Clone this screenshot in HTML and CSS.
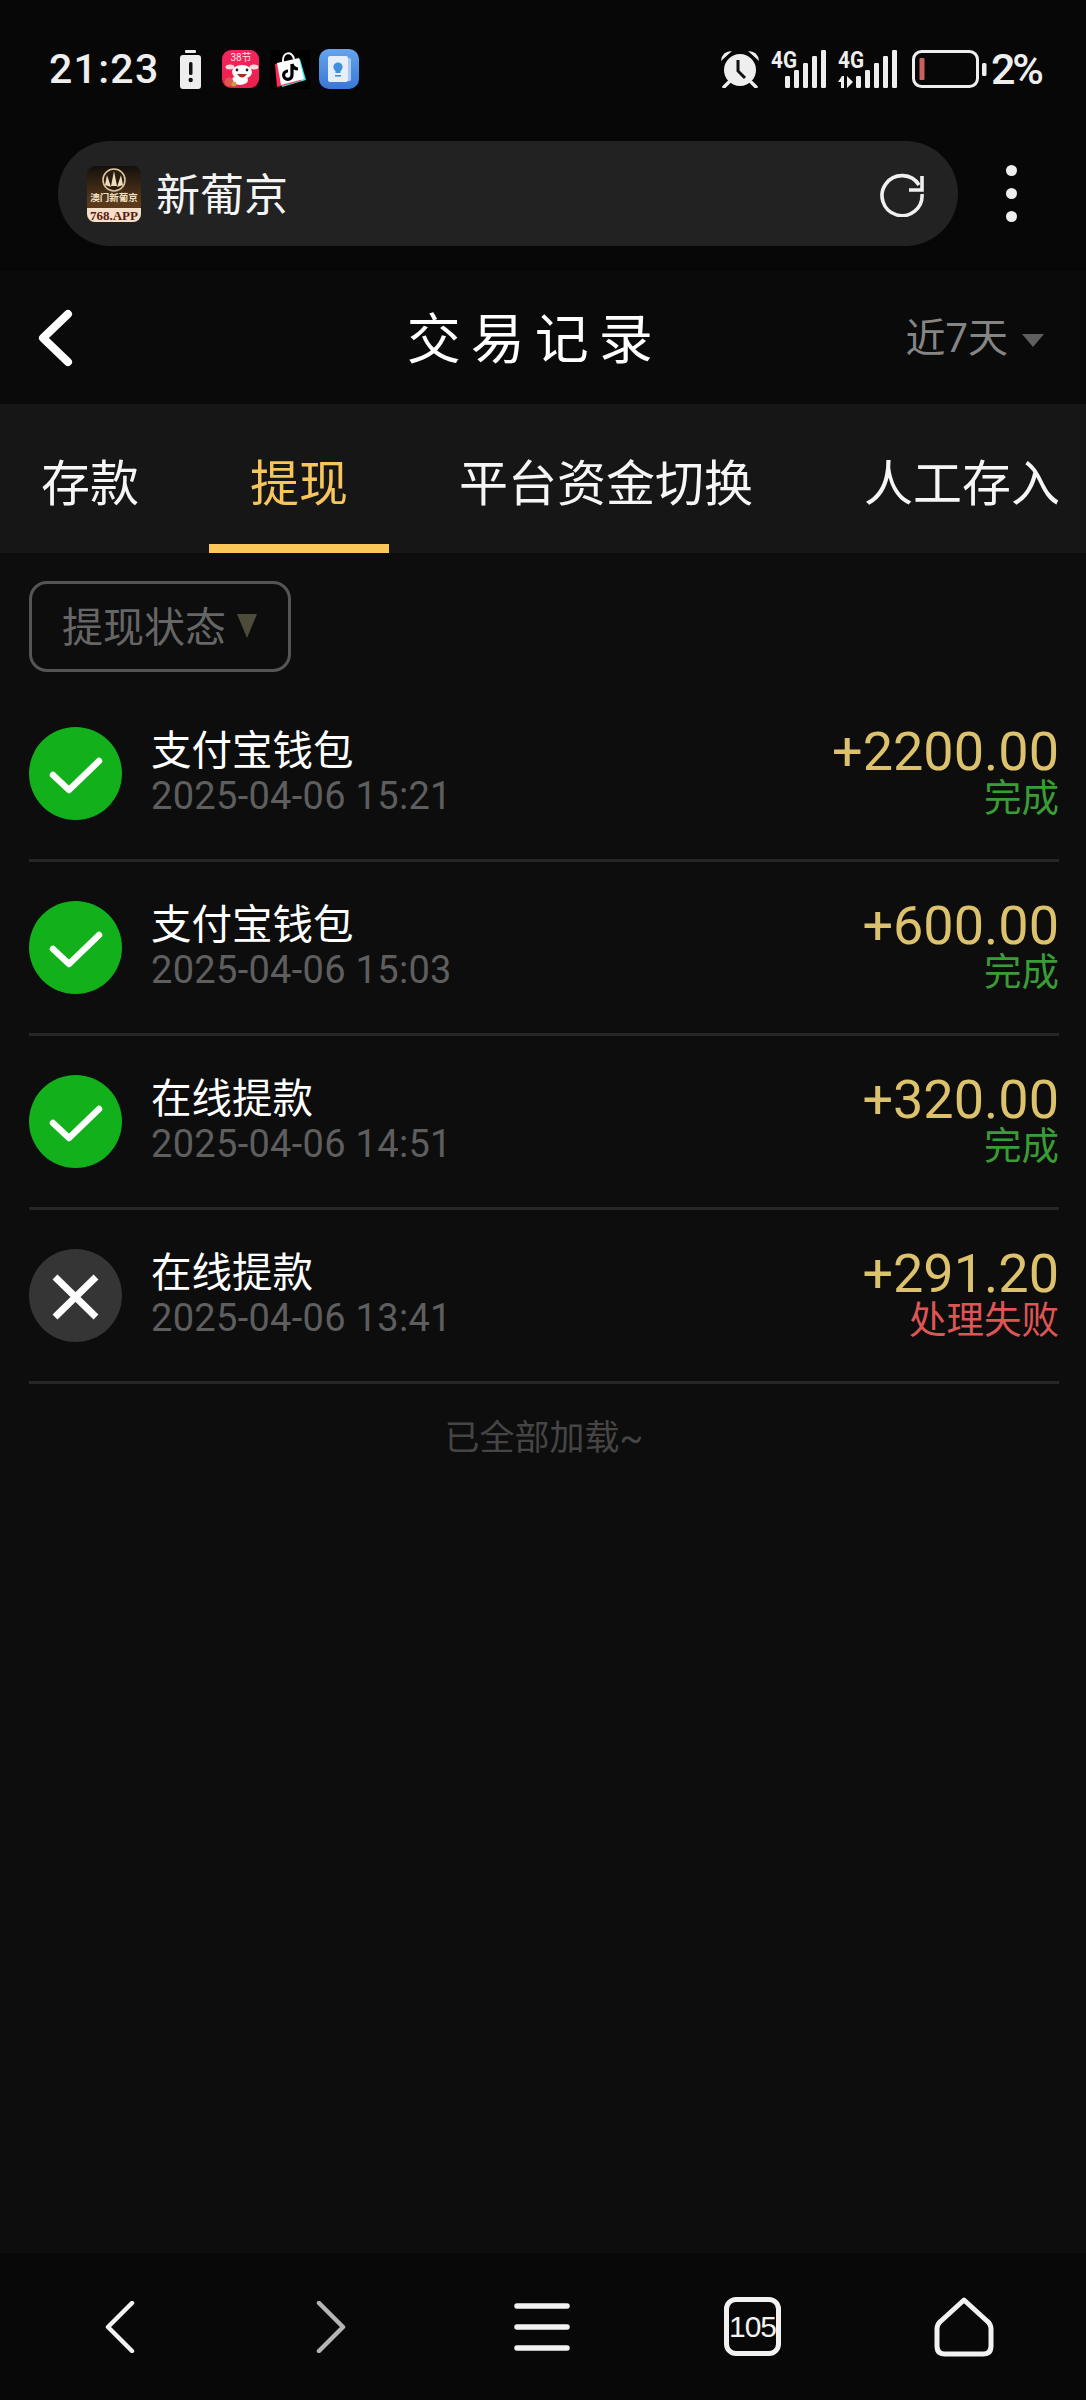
FILE: index.html
```html
<!DOCTYPE html>
<html lang="zh-CN">
<head>
  <meta charset="UTF-8" />
  <meta name="viewport" content="width=device-width, initial-scale=1.0"/>
  <title>交易记录</title>
  <link rel="stylesheet" href="styles.css">
</head>
<body>
  <svg class="sprites" width="0" height="0">
    <symbol id="ok" viewBox="0 0 93 93">
      <circle cx="46.5" cy="46.5" r="46.5" fill="#12b01a"/>
      <path d="M24 48 L40 63 L70 34" fill="none" stroke="#fff" stroke-width="6.5" stroke-linecap="round" stroke-linejoin="round"/>
    </symbol>
    <symbol id="fail" viewBox="0 0 93 93">
      <circle cx="46.5" cy="46.5" r="46.5" fill="#353535"/>
      <path d="M26 28 L67 68 M67 28 L26 68" fill="none" stroke="#fff" stroke-width="7"/>
    </symbol>
  </svg>

  <header class="status">
    <div class="status-left">
      <span class="clock">21:23</span>
      <svg class="ic-batt" width="23" height="39" viewBox="0 0 23 39">
        <rect x="6" y="0" width="11" height="3" rx="1" fill="#eee"/>
        <rect x="1" y="5" width="21" height="34" rx="3" fill="#eee"/>
        <rect x="10" y="12" width="3.5" height="13" rx="1.5" fill="#111"/>
        <circle cx="11.7" cy="30" r="2.2" fill="#111"/>
      </svg>
      <svg class="ic-pink" width="37" height="38" viewBox="0 0 37 38">
        <defs>
          <linearGradient id="pinkbg" x1="0" y1="0" x2="0" y2="1">
            <stop offset="0" stop-color="#f5265f"/>
            <stop offset="1" stop-color="#e8204a"/>
          </linearGradient>
        </defs>
        <rect width="37" height="38" rx="9" fill="url(#pinkbg)"/>
        <text x="19" y="11" text-anchor="middle" class="pink-txt">38节</text>
        <ellipse cx="20" cy="22" rx="10" ry="7" fill="#fff"/>
        <ellipse cx="8" cy="17" rx="4.5" ry="2.5" fill="#fbd9d9"/>
        <ellipse cx="32" cy="17" rx="4.5" ry="2.5" fill="#fbd9d9"/>
        <ellipse cx="18" cy="30" rx="8" ry="5" fill="#fff"/>
        <circle cx="15" cy="20" r="1.4" fill="#222"/>
        <circle cx="25" cy="20" r="1.4" fill="#222"/>
        <path d="M15 24 Q20 31 25 24 Z" fill="#b3261e"/>
        <circle cx="7" cy="32" r="4.5" fill="#e2574c"/>
        <circle cx="12" cy="34" r="2.5" fill="#c9a04a"/>
      </svg>
      <svg class="ic-shop" width="40" height="39" viewBox="0 0 40 39">
        <rect width="40" height="39" fill="#000"/>
        <path d="M7 14 L30 9 L36 30 L12 37 Z" fill="#25f4ee"/>
        <path d="M5 14 L26 9 L31 31 L7 37 Z" fill="#fe2c55"/>
        <path d="M7 13 L29 8 L34 29 L11 35 Z" fill="#fff"/>
        <path d="M13 12 C12 2 22 0 24 9" fill="none" stroke="#fff" stroke-width="2"/>
        <path d="M22 14 L22 25 A4.2 4.2 0 1 1 18 21 M22 14 C23 18 25 19 28 19" fill="none" stroke="#000" stroke-width="3.2"/>
      </svg>
      <svg class="ic-tips" width="40" height="40" viewBox="0 0 40 40">
        <defs>
          <linearGradient id="bluebg" x1="0" y1="0" x2="0" y2="1">
            <stop offset="0" stop-color="#64a5ec"/>
            <stop offset="1" stop-color="#3b77d6"/>
          </linearGradient>
        </defs>
        <rect width="40" height="40" rx="10" fill="url(#bluebg)"/>
        <rect x="28" y="9" width="4" height="23" rx="1.5" fill="#a9c8f2"/>
        <rect x="9" y="7" width="20" height="26" rx="2" fill="#e6eefa"/>
        <circle cx="19" cy="18" r="4.6" fill="#3f8fe0"/>
        <rect x="16.5" y="22" width="5" height="2" fill="#3f8fe0"/>
        <rect x="16" y="26" width="6" height="1.6" fill="#3f8fe0"/>
      </svg>
    </div>
    <div class="status-right">
      <svg class="ic-alarm" width="40" height="38" viewBox="0 0 40 38">
        <circle cx="20" cy="20" r="16" fill="#eee"/>
        <path d="M1 11 Q2 1 12 1 Z M39 11 Q38 1 28 1 Z" fill="#eee"/>
        <path d="M9 32 L4 37 M31 32 L36 37" stroke="#eee" stroke-width="3.4" stroke-linecap="round"/>
        <path d="M18 10 L18 21 L25 28" fill="none" stroke="#111" stroke-width="3"/>
      </svg>
      <svg class="ic-signal" width="58" height="38" viewBox="0 0 58 38">
        <text x="0" y="18" class="sig-txt" textLength="26" lengthAdjust="spacingAndGlyphs">4G</text>
        <rect x="14" y="26" width="5" height="12" rx="1.2" fill="#eee"/>
        <rect x="23" y="20" width="5" height="18" rx="1.2" fill="#eee"/>
        <rect x="32" y="13" width="5" height="25" rx="1.2" fill="#eee"/>
        <rect x="41" y="6" width="5" height="32" rx="1.2" fill="#eee"/>
        <rect x="50" y="0" width="5" height="38" rx="1.2" fill="#eee"/>
      </svg>
      <svg class="ic-signal" width="60" height="38" viewBox="0 0 60 38">
        <text x="0" y="18" class="sig-txt" textLength="26" lengthAdjust="spacingAndGlyphs">4G</text>
        <path d="M0 32 L4 26 L6 26 L6 38 L3 38 L3 32 Z M9 26 L15 32 L9 38 Z" fill="#eee"/>
        <rect x="18" y="26" width="5" height="12" rx="1.2" fill="#eee"/>
        <rect x="27" y="20" width="5" height="18" rx="1.2" fill="#eee"/>
        <rect x="36" y="13" width="5" height="25" rx="1.2" fill="#eee"/>
        <rect x="45" y="6" width="5" height="32" rx="1.2" fill="#eee"/>
        <rect x="54" y="0" width="5" height="38" rx="1.2" fill="#eee"/>
      </svg>
      <svg class="ic-power" width="75" height="38" viewBox="0 0 75 38">
        <rect x="1.5" y="1.5" width="64" height="35" rx="8" fill="none" stroke="#eee" stroke-width="3"/>
        <rect x="7.5" y="8" width="5" height="22" rx="1" fill="#c9605c"/>
        <rect x="70" y="13" width="4.5" height="13" rx="1.5" fill="#eee"/>
      </svg>
      <span class="pct">2%</span>
    </div>
  </header>

  <div class="urlbar">
    <div class="pill">
      <svg class="logo" width="54" height="56" viewBox="0 0 54 56">
        <defs>
          <linearGradient id="logobg" x1="0" y1="0" x2="0" y2="1">
            <stop offset="0" stop-color="#14100c"/>
            <stop offset="0.65" stop-color="#5a3a1a"/>
          </linearGradient>
          <clipPath id="logoclip"><rect width="54" height="56" rx="8"/></clipPath>
        </defs>
        <g clip-path="url(#logoclip)">
          <rect width="54" height="56" fill="url(#logobg)"/>
          <circle cx="27" cy="14" r="11" fill="#2a1c0e" stroke="#e0c6a0" stroke-width="1.6"/>
          <path d="M27 5 L30 20 L24 20 Z M20 9 L24 21 L18 19 Z M34 9 L30 21 L36 19 Z" fill="#efdcbd"/>
          <text x="27" y="35" text-anchor="middle" class="logo-cn">澳门新葡京</text>
          <rect x="0" y="42" width="54" height="14" fill="#f5dfc8"/>
          <text x="27" y="53.5" text-anchor="middle" class="logo-app" textLength="48" lengthAdjust="spacingAndGlyphs">768.APP</text>
        </g>
      </svg>
      <span class="site">新葡京</span>
      <svg class="reload" width="46" height="46" viewBox="0 0 46 46">
        <path d="M40 14 A20 20 0 1 0 43 23" fill="none" stroke="#f0f0f0" stroke-width="3.6"/>
        <path d="M43 5 L43 19 L30 19" fill="none" stroke="#f0f0f0" stroke-width="3.6"/>
      </svg>
    </div>
    <div class="dots"><i></i><i></i><i></i></div>
  </div>

  <nav class="topnav">
    <svg class="back" width="36" height="58" viewBox="0 0 36 58">
      <path d="M31 5 L6 29 L31 53" fill="none" stroke="#fff" stroke-width="8" stroke-linecap="round" stroke-linejoin="round"/>
    </svg>
    <h1>交易记录</h1>
    <div class="range">近7天<span class="range-arrow"></span></div>
  </nav>

  <div class="tabs">
    <div class="tab">存款</div>
    <div class="tab active">提现</div>
    <div class="tab">平台资金切换</div>
    <div class="tab">人工存入</div>
  </div>

  <main class="content">
    <div class="filter">提现状态<span class="filter-arrow"></span></div>

    <ul class="records">
      <li class="record">
        <svg class="state" width="93" height="93"><use href="#ok"/></svg>
        <div class="info">
          <div class="name">支付宝钱包</div>
          <div class="date">2025-04-06 15:21</div>
        </div>
        <div class="money">
          <div class="amount">+2200.00</div>
          <div class="result done">完成</div>
        </div>
      </li>
      <li class="record">
        <svg class="state" width="93" height="93"><use href="#ok"/></svg>
        <div class="info">
          <div class="name">支付宝钱包</div>
          <div class="date">2025-04-06 15:03</div>
        </div>
        <div class="money">
          <div class="amount">+600.00</div>
          <div class="result done">完成</div>
        </div>
      </li>
      <li class="record">
        <svg class="state" width="93" height="93"><use href="#ok"/></svg>
        <div class="info">
          <div class="name">在线提款</div>
          <div class="date">2025-04-06 14:51</div>
        </div>
        <div class="money">
          <div class="amount">+320.00</div>
          <div class="result done">完成</div>
        </div>
      </li>
      <li class="record">
        <svg class="state" width="93" height="93"><use href="#fail"/></svg>
        <div class="info">
          <div class="name">在线提款</div>
          <div class="date">2025-04-06 13:41</div>
        </div>
        <div class="money">
          <div class="amount">+291.20</div>
          <div class="result failed">处理失败</div>
        </div>
      </li>
    </ul>

    <div class="end">已全部加载~</div>
  </main>

  <footer class="bottombar">
    <svg width="30" height="52" viewBox="0 0 30 52">
      <path d="M27 2 L3 26 L27 50" fill="none" stroke="#f2f2f2" stroke-width="4.5" stroke-linecap="round" stroke-linejoin="round"/>
    </svg>
    <svg width="30" height="52" viewBox="0 0 30 52">
      <path d="M3 2 L27 26 L3 50" fill="none" stroke="#b5b5b5" stroke-width="4.5" stroke-linecap="round" stroke-linejoin="round"/>
    </svg>
    <svg width="56" height="50" viewBox="0 0 56 50">
      <path d="M3 4 H53 M3 25 H53 M3 46 H53" fill="none" stroke="#f2f2f2" stroke-width="5.5" stroke-linecap="round"/>
    </svg>
    <div class="tabcount">105</div>
    <svg width="60" height="60" viewBox="0 0 60 60">
      <path d="M30 3 L53 24 Q57 27 57 32 L57 49 Q57 57 49 57 L11 57 Q3 57 3 49 L3 32 Q3 27 7 24 Z" fill="none" stroke="#f2f2f2" stroke-width="5" stroke-linejoin="round"/>
    </svg>
  </footer>
</body>
</html>
```
FILE: styles.css
```css
* {
  box-sizing: border-box;
}

body {
  font-family: Roboto, "Noto Sans CJK SC", sans-serif;
  background-color: #0d0d0d;
  color: #ffffff;
  margin: 0;
  width: 1086px;
  height: 2400px;
  display: flex;
  flex-direction: column;
  overflow: hidden;
}

.sprites {
  position: absolute;
}

/* phone status bar */
.status {
  height: 138px;
  flex-shrink: 0;
  padding: 0 45px 0 49px;
  background-color: #070707;
  display: flex;
  justify-content: space-between;
  align-items: center;
  color: #eeeeee;
}

.status-left,
.status-right {
  display: flex;
  align-items: center;
}

.clock {
  font-size: 41px;
  font-weight: 500;
  letter-spacing: 1.3px;
  margin-right: 19px;
}

.ic-batt { margin-right: 20px; }
.ic-pink { margin-right: 11px; }
.ic-shop { margin-right: 9px; }

.ic-alarm { margin-right: 11px; }
.status-right .ic-signal { margin-right: 9px; overflow: visible; }
.status-right .ic-signal + .ic-power { margin-left: 5px; margin-right: 4px; }

.pct {
  font-size: 43px;
  font-weight: 500;
  letter-spacing: -3px;
}

.pink-txt { font-size: 10px; fill: #ffe3ea; font-family: Roboto, "Noto Sans CJK SC", sans-serif; }
.sig-txt { font-size: 24px; font-weight: 700; fill: #eeeeee; }
.logo-cn { font-size: 9.5px; font-weight: 700; fill: #f0e0c8; font-family: "Noto Sans CJK SC", sans-serif; }
.logo-app { font-size: 12px; font-weight: 700; fill: #5a1a14; font-family: "Liberation Serif", serif; }

/* browser address row */
.urlbar {
  height: 133px;
  flex-shrink: 0;
  padding: 3px 0 0 58px;
  background-color: #070707;
  display: flex;
  align-items: flex-start;
}

.pill {
  width: 900px;
  height: 105px;
  border-radius: 53px;
  background-color: #222222;
  padding: 0 33px 0 29px;
  display: flex;
  align-items: center;
}

.logo { flex-shrink: 0; }

.site {
  font-size: 44px;
  margin: 0 0 3px 15px;
  color: #f4f4f4;
  flex: 1;
}

.dots {
  width: 106px;
  height: 105px;
  display: flex;
  flex-direction: column;
  align-items: center;
  justify-content: center;
  gap: 12px;
}

.dots i {
  width: 11px;
  height: 11px;
  border-radius: 50%;
  background-color: #eeeeee;
}

/* page title */
.topnav {
  height: 133px;
  flex-shrink: 0;
  background-color: #0a0a0a;
  padding: 0 42px 0 37px;
  display: flex;
  align-items: center;
  justify-content: space-between;
}

.topnav h1 {
  margin: 0 0 5px 91px;
  font-size: 54px;
  font-weight: 400;
  letter-spacing: 10px;
}

.range {
  font-size: 40px;
  color: #858585;
  display: flex;
  align-items: center;
  margin: 0 -1px 6px 0;
  padding-right: 1px;
}

.range-arrow {
  width: 0;
  height: 0;
  margin: 12px 0 0 14px;
  border-left: 11px solid transparent;
  border-right: 11px solid transparent;
  border-top: 13px solid #5f5f5f;
}

/* category tabs */
.tabs {
  height: 149px;
  flex-shrink: 0;
  background-color: #161616;
  display: flex;
  gap: 29px;
  white-space: nowrap;
  overflow: hidden;
}

.tab {
  padding: 13px 41px 0;
  font-size: 49px;
  line-height: 136px;
  color: #f6f6f6;
}

.tab.active {
  color: #f7c55c;
  box-shadow: inset 0 -9px 0 #fbc758;
}

/* list area */
.content {
  flex: 1;
  padding: 28px 27px 0 29px;
}

.filter {
  width: 262px;
  height: 91px;
  border: 3px solid #555555;
  border-radius: 18px;
  padding: 0 0 6px 30px;
  font-size: 41px;
  color: #666666;
  display: flex;
  align-items: center;
}

.filter-arrow {
  width: 0;
  height: 0;
  margin: 5px 0 0 11px;
  border-left: 10px solid transparent;
  border-right: 10px solid transparent;
  border-top: 24px solid #4f4b3a;
}

.records {
  list-style: none;
  margin: 16px 0 0;
  padding: 0;
}

.record {
  height: 174px;
  border-bottom: 3px solid #262626;
  display: flex;
  align-items: center;
}

.state {
  flex-shrink: 0;
}

.info {
  flex: 1;
  margin-left: 29px;
}

.name {
  font-size: 40.5px;
  line-height: 46px;
}

.date {
  font-size: 38px;
  line-height: 45px;
  letter-spacing: 0.3px;
  color: #5e5e5e;
}

.money {
  text-align: right;
}

.amount {
  font-size: 54px;
  line-height: 48px;
  color: #dcc26c;
}

.result {
  font-size: 37.5px;
  line-height: 44px;
}

.result.done { color: #3a9c36; }
.result.failed { color: #dd5555; }

.end {
  text-align: center;
  font-size: 35px;
  line-height: 110px;
  color: #454545;
}

/* browser toolbar */
.bottombar {
  height: 147px;
  flex-shrink: 0;
  background-color: #080808;
  padding: 0 17px 0 14px;
  display: grid;
  grid-template-columns: repeat(5, 1fr);
  justify-items: center;
  align-items: center;
}

.tabcount {
  width: 57px;
  height: 59px;
  border: 5px solid #f2f2f2;
  border-radius: 12px;
  font-family: "Liberation Sans", sans-serif;
  font-size: 30px;
  color: #f2f2f2;
  display: flex;
  align-items: center;
  justify-content: center;
  letter-spacing: -1px;
}
```
